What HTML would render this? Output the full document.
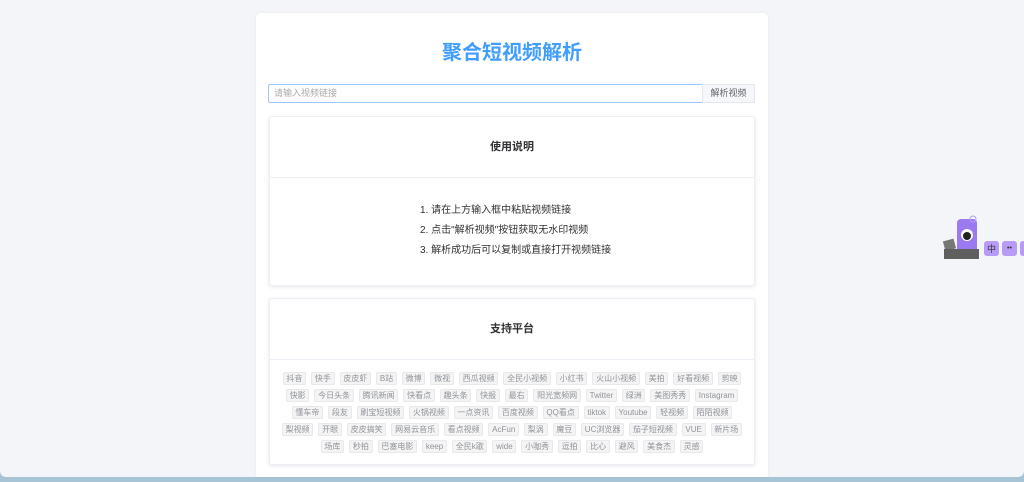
<!DOCTYPE html>
<html><head><meta charset="utf-8"><style>
*{margin:0;padding:0;box-sizing:border-box}
body{width:1024px;height:482px;overflow:hidden;background:#a7c3d6;font-family:"Liberation Sans","Noto Sans CJK SC",sans-serif;position:relative}
.bg{position:absolute;left:0;top:0;width:1024px;height:477px;background:#f4f5f8;border-radius:0 0 6px 6px}
.main{position:absolute;left:256px;top:13px;width:512px;height:464px;background:#fff;border-radius:5px 5px 0 0;box-shadow:0 0 3px rgba(0,0,0,.05)}
h1{position:absolute;left:0;width:512px;top:28px;text-align:center;color:#409eff;font-size:20px;font-weight:bold;line-height:24px}
.inp{position:absolute;left:12px;top:71px;width:435px;height:19px;border:1px solid #99c7f7;border-radius:2px 0 0 2px;font-size:9px;color:#aaa;line-height:17px;padding-left:5px}
.btn{position:absolute;left:446px;top:71px;width:53px;height:19px;background:#f5f7fa;border:1px solid #e4e7ed;font-size:9px;color:#606266;text-align:center;line-height:17px}
.card{position:absolute;left:13px;width:486px;background:#fff;border:1px solid #ebeef5;border-radius:3px;box-shadow:0 1px 5px rgba(0,0,0,.1)}
.ch{height:61px;border-bottom:1px solid #ebeef5;text-align:center;line-height:61px;font-size:11px;font-weight:bold;color:#303133}
ol{list-style:none;padding-left:150px;font-size:10px;color:#303133;margin-top:25px}
ol li{height:20px;line-height:16px}
.tags{padding:12px 0 0;text-align:center;font-size:0;line-height:0}
.tags div{white-space:nowrap;height:17px}
.tags span{display:inline-block;font-size:8px;line-height:11px;height:13px;padding:0 2.75px;margin:0 2.5px;background:#f4f4f5;border:1px solid #e9e9eb;border-radius:2px;color:#909399}
</style></head><body>
<div class="bg"></div>
<div class="main">
<h1>聚合短视频解析</h1>
<div class="inp">请输入视频链接</div>
<div class="btn">解析视频</div>
<div class="card" style="top:103px;height:170px">
<div class="ch">使用说明</div>
<ol><li>1. 请在上方输入框中粘贴视频链接</li><li>2. 点击"解析视频"按钮获取无水印视频</li><li>3. 解析成功后可以复制或直接打开视频链接</li></ol>
</div>
<div class="card" style="top:285px;height:167px">
<div class="ch">支持平台</div>
<div class="tags">
<div><span>抖音</span><span>快手</span><span>皮皮虾</span><span>B站</span><span>微博</span><span>微视</span><span>西瓜视频</span><span>全民小视频</span><span>小红书</span><span>火山小视频</span><span>美拍</span><span>好看视频</span><span>剪映</span></div>
<div><span>快影</span><span>今日头条</span><span>腾讯新闻</span><span>快看点</span><span>趣头条</span><span>快报</span><span>最右</span><span>阳光宽频网</span><span>Twitter</span><span>绿洲</span><span>美图秀秀</span><span>Instagram</span></div>
<div><span>懂车帝</span><span>段友</span><span>刷宝短视频</span><span>火锅视频</span><span>一点资讯</span><span>百度视频</span><span>QQ看点</span><span>tiktok</span><span>Youtube</span><span>轻视频</span><span>陌陌视频</span></div>
<div><span>梨视频</span><span>开眼</span><span>皮皮搞笑</span><span>网易云音乐</span><span>看点视频</span><span>AcFun</span><span>梨涡</span><span>魔豆</span><span>UC浏览器</span><span>茄子短视频</span><span>VUE</span><span>新片场</span></div>
<div><span>场库</span><span>秒拍</span><span>巴塞电影</span><span>keep</span><span>全民k歌</span><span>wide</span><span>小咖秀</span><span>逗拍</span><span>比心</span><span>避风</span><span>美食杰</span><span>灵感</span></div>
</div></div>
</div>
<svg style="position:absolute;left:943px;top:213px" width="81" height="50">
<rect x="14" y="6" width="20" height="34" rx="4" fill="#9b7af0"/>
<circle cx="30" cy="6" r="3" fill="none" stroke="#b59cf5" stroke-width="1"/>
<circle cx="24" cy="22" r="6" fill="#fff"/><circle cx="24" cy="23" r="4" fill="#222"/>
<rect x="1" y="27" width="11" height="10" fill="#777" transform="rotate(-15 6 32)"/>
<rect x="1" y="36" width="35" height="10" fill="#5f5f5f"/>
<rect x="41" y="28" width="15" height="15" rx="3" fill="#b79bf7"/><text x="48.5" y="39" font-size="9" text-anchor="middle" fill="#333">中</text>
<rect x="59" y="28" width="15" height="15" rx="3" fill="#b79bf7"/><text x="66.5" y="37" font-size="7" text-anchor="middle" fill="#333">••</text>
<rect x="77" y="28" width="6" height="15" rx="3" fill="#b79bf7"/>
</svg>
</body></html>
